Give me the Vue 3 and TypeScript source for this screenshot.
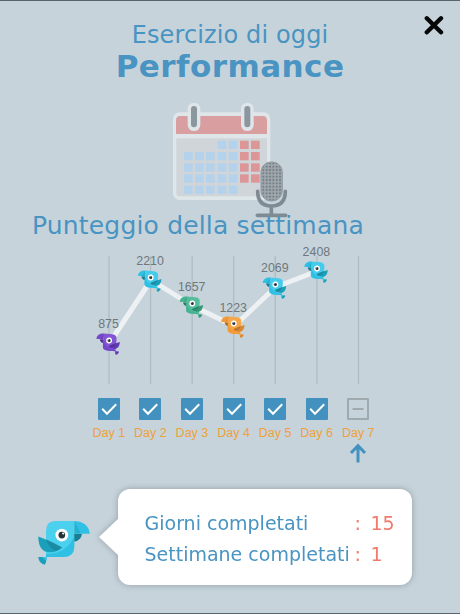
<script setup lang="ts">
interface Palette { body: string; light: string; wing: string; dark: string }
interface Day { score: number | null; x: number; y: number; labelY: number; colors: Palette }

const blue: Palette = { body: '#2fc0e4', light: '#45cbec', wing: '#1aa0bb', dark: '#1a7e93' }
const purple: Palette = { body: '#7647cb', light: '#8354d6', wing: '#6239b2', dark: '#50309a' }
const green: Palette = { body: '#45b491', light: '#56bd9c', wing: '#35997a', dark: '#2a7d66' }
const orange: Palette = { body: '#f39a36', light: '#f6a646', wing: '#d98730', dark: '#b06c30' }

const days: Day[] = [
  { score: 875, x: 108.5, y: 340.5, labelY: 328, colors: purple },
  { score: 2210, x: 150.1, y: 277.5, labelY: 265, colors: blue },
  { score: 1657, x: 191.7, y: 303.5, labelY: 291, colors: green },
  { score: 1223, x: 233.2, y: 323.5, labelY: 311.5, colors: orange },
  { score: 2069, x: 274.8, y: 284.5, labelY: 272, colors: blue },
  { score: 2408, x: 316.4, y: 268.5, labelY: 256, colors: blue },
  { score: null, x: 358, y: 0, labelY: 0, colors: blue },
]
const played = days.filter((d) => d.score !== null)
const line = played.map((d) => `${d.x + 1},${d.y + 2.5}`).join(' ')

const dates: { x: number; y: number; weekend: boolean }[] = []
const cols = [57, 90, 123, 158, 191, 225, 258]
const rows = [137, 171, 205, 238, 272]
rows.forEach((y, r) => cols.forEach((x, c) => {
  if ((r === 0 && c < 3) || (r === 4 && c > 4)) return
  dates.push({ x, y, weekend: c > 4 })
}))
</script>

<template>
  <main class="screen">
    <button class="close" aria-label="Chiudi">
      <svg viewBox="0 0 20 20"><path d="M2.8 3.3 17 17.3M17 3.3 2.8 17.3" /></svg>
    </button>
    <h2 class="subtitle"><span>Esercizio di oggi</span></h2>
    <h1 class="title"><span>Performance</span></h1>

    <svg class="calendar" viewBox="165 83 135 127">
      <defs>
        <pattern id="mesh" width="10" height="10" patternUnits="userSpaceOnUse">
          <rect width="10" height="10" fill="#a3abb0" />
          <rect x="2" y="2" width="6" height="6" fill="#737e86" />
        </pattern>
      </defs>
      <g transform="translate(165 95) scale(.33333)">
        <rect x="24" y="52" width="292" height="263" rx="20" fill="#dfe6e9" />
        <path d="M33 117V76Q33 63 46 63H293Q306 63 306 76V117Z" fill="#d99fa0" />
        <path d="M34 130H306V294Q306 304 296 304H44Q34 304 34 294Z" fill="#cfd5d8" />
        <rect v-for="(d, i) in dates" :key="i" :x="d.x" :y="d.y" width="26" height="25" :fill="d.weekend ? '#dc9698' : '#b5d2ec'" />
        <g v-for="x in [87, 247]" :key="x">
          <rect :x="x - 19" y="23" width="38" height="85" rx="19" fill="#dfe6e9" />
          <rect :x="x - 9" y="33" width="18" height="64" rx="9" fill="#8b979f" />
        </g>
        <rect x="288" y="201" width="64" height="117" rx="30" fill="url(#mesh)" stroke="#929ca3" stroke-width="3" />
        <path d="M278 289Q278 333 319 333Q361 333 361 289M319 335V361M277 361H362" fill="none" stroke="#7e8b94" stroke-width="11" stroke-linecap="round" />
      </g>
    </svg>

    <h2 class="week-title"><span>Punteggio della settimana</span></h2>

    <svg class="chart" viewBox="0 240 460 158">
      <defs>
        <g id="bird">
          <path d="M27 232H51V240Q50 251 46 255Q29 252 27 232Z" fill="var(--wing)" />
          <path d="M38 232H51V245Z" fill="var(--body)" />
          <path d="M132 164H157Q154 185 132 187Z" fill="var(--dark)" />
          <path d="M134 125C158 125 179 139 180 163H134Z" fill="var(--body)" />
          <path d="M134 125L154 163H134Z" fill="var(--wing)" opacity=".5" />
          <path d="M50 232V153Q50 125 80 125H134V202Q134 232 103 232Z" fill="var(--light)" />
          <path d="M134 170V202Q134 232 103 232H50V224Q112 224 134 170Z" fill="var(--body)" />
          <path d="M27 171Q59 183 98 204Q82 218 62 218C37 218 27 200 27 171Z" fill="var(--wing)" />
          <path d="M50 179Q75 190 98 204Q88 212 79 214Q58 206 50 179Z" fill="var(--dark)" opacity=".6" />
          <circle cx="97" cy="167" r="19" fill="#fff" />
          <circle cx="97" cy="167" r="10" fill="#27333a" />
          <circle cx="101" cy="162" r="3" fill="#fff" />
        </g>
      </defs>
      <path v-for="d in days" :key="d.x" :d="`M${d.x + .5} 256V384`" stroke="#b1bcc2" stroke-width="1.3" />
      <polyline :points="line" fill="none" stroke="#eef1f3" stroke-width="5" stroke-linejoin="round" />
      <g v-for="d in played" :key="d.x">
        <g class="bird" :style="{ '--body': d.colors.body, '--light': d.colors.light, '--wing': d.colors.wing, '--dark': d.colors.dark }" :transform="`translate(${d.x + .6} ${d.y}) rotate(5) scale(-.155 .155) translate(-97 -167)`">
          <use href="#bird" />
        </g>
        <text class="score" :x="d.x" :y="d.labelY">{{ d.score }}</text>
      </g>
    </svg>

    <ul class="days">
      <li v-for="(d, i) in days" :key="d.x">
        <span class="box" :class="{ done: d.score !== null }">
          <svg viewBox="0 0 22 22"><path v-if="d.score !== null" d="M4.2 10.8 9 15.8 18.2 6.3" /><path v-else d="M5.5 11H16.5" /></svg>
        </span>
        <span class="day">Day {{ i + 1 }}</span>
        <svg v-if="d.score === null" class="arrow" viewBox="0 0 18 20"><path d="M9 19.5V3M2 10 9 2.6 16 10" /></svg>
      </li>
    </ul>

    <section class="summary">
      <svg class="mascot bird blue" viewBox="27 125 153 131"><use href="#bird" /></svg>
      <div class="bubble">
        <svg class="tail" viewBox="0 0 22 40"><path d="M22 0 1 20 22 40Z" /></svg>
        <div class="stat"><span class="name days-done">Giorni completati</span><span class="value">:</span><span class="value num">15</span></div>
        <div class="stat"><span class="name weeks-done">Settimane completati</span><span class="value">:</span><span class="value num">1</span></div>
      </div>
    </section>
  </main>
</template>

<style>
body { margin: 0; background: #c6d3da; }
</style>

<style scoped>
.screen { position: relative; box-sizing: border-box; width: 460px; height: 614px; overflow: hidden; padding-top: 19px; border-top: 1px solid #56656f; border-bottom: 1px solid #56656f; background: #c6d3da; color: #4994c2; font-family: Verdana, "DejaVu Sans", sans-serif; display: flex; flex-direction: column; }
.close { position: absolute; right: 16px; top: 14px; width: 20px; height: 20px; padding: 0; border: 0; background: none; }
.close svg { display: block; }
.close path { fill: none; stroke: #050708; stroke-width: 4.4; stroke-linecap: round; }
h1, h2 { margin: 0; font-weight: 400; text-align: center; white-space: nowrap; flex: none; }
.subtitle { font-size: 24px; line-height: 31px; letter-spacing: .12px; }
.title { font-size: 31px; line-height: 30px; height: 32px; font-weight: 700; letter-spacing: .45px; }
.calendar { width: 135px; height: 127px; margin-left: 165px; overflow: visible; flex: none; }
.week-title { font-size: 25px; line-height: 32px; height: 30px; letter-spacing: .17px; text-align: left; padding-left: 32px; }
.chart { width: 460px; height: 158px; flex: none; display: block; }
.score { font: 12.4px "Liberation Sans", Arial, sans-serif; fill: #6e777c; text-anchor: middle; }
.days { list-style: none; margin: 0; padding: 0 0 0 88px; display: grid; grid-template-columns: repeat(7, 41.58px); height: 91px; flex: none; }
.days li { display: flex; flex-direction: column; align-items: center; }
.box { box-sizing: border-box; width: 22px; height: 22px; border: 2px solid #a0a9ae; border-radius: 1px; display: flex; align-items: center; justify-content: center; }
.box.done { background: #4391bf; border-color: #4391bf; }
.box svg { width: 22px; height: 22px; flex: none; }
.box path { fill: none; stroke: #a0a9ae; stroke-width: 2; }
.box.done path { stroke: #fff; }
.day { font: 12.5px/16px "Liberation Sans", Arial, sans-serif; color: #eda23d; margin-top: 5px; white-space: nowrap; }
.arrow { width: 18px; height: 20px; margin-top: 2px; }
.arrow path { fill: none; stroke: #4391bf; stroke-width: 3; }
.summary { display: flex; align-items: flex-start; padding-left: 38px; }
.mascot { width: 52px; height: 44px; margin: 32px 27.5px 0 0; flex: none; }
.blue { --body: #2fc0e4; --light: #4bd0ee; --wing: #1aa0bb; --dark: #1a7e93; }
.bubble { position: relative; box-sizing: border-box; width: 294px; height: 96px; padding: 19px 0 0 27px; border-radius: 12px; background: #fff; filter: drop-shadow(0 0 3px rgba(70, 80, 85, .4)); }
.tail { position: absolute; left: -20px; top: 28px; width: 22px; height: 40px; }
.tail path { fill: #fff; }
.stat { display: grid; grid-template-columns: 210px 16px 1fr; height: 30.5px; line-height: 30px; font-size: 19px; white-space: nowrap; }
.value { color: #f07b6c; }
</style>
